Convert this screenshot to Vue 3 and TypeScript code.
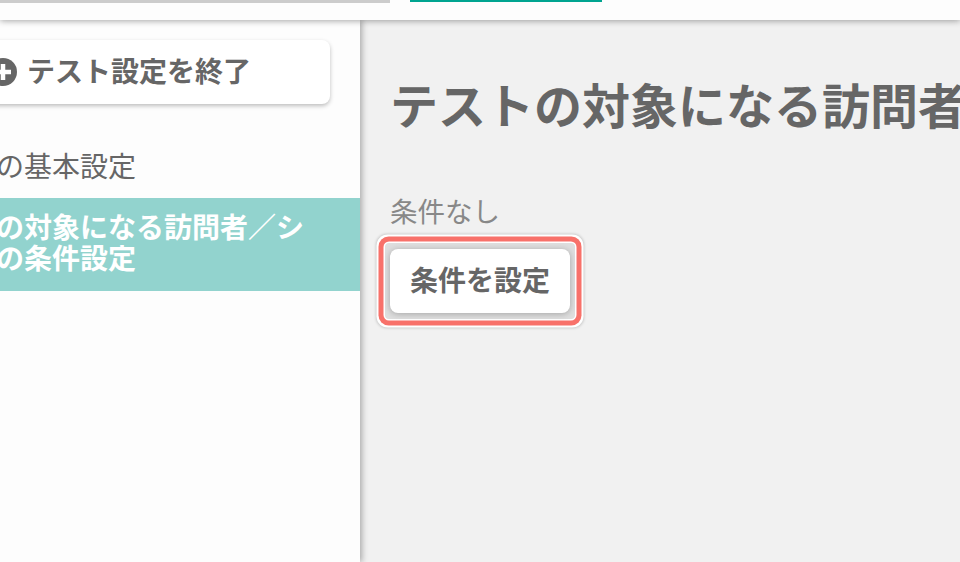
<script setup lang="ts">
const heading = 'テストの対象になる訪問者／シナリオの条件設定'
</script>

<template>
  <div class="page">
    <header class="topbar">
      <div class="search"></div>
      <div class="tab"></div>
    </header>
    <div class="body">
      <aside class="side">
        <button class="end">
          <svg class="end-icon" viewBox="0 0 28 28" width="28" height="28">
            <circle cx="14" cy="14" r="14" fill="#666" />
            <path d="M14 6v16M6 14h16" stroke="#fff" stroke-width="4.5" />
          </svg>
          <span class="end-label">テスト設定を終了</span>
        </button>
        <nav class="nav">
          <div class="nav-item">テストの基本設定</div>
          <div class="nav-item active">テストの対象になる訪問者／シナリオの条件設定</div>
        </nav>
      </aside>
      <main class="main">
        <h1 class="title">{{ heading }}</h1>
        <p class="none">条件なし</p>
        <div class="ring">
          <button class="set">条件を設定</button>
        </div>
      </main>
    </div>
  </div>
</template>

<style>
html, body { margin: 0; overflow: hidden; }
</style>

<style scoped>
.page {
  width: 960px;
  height: 562px;
  overflow: hidden;
  background: #f1f1f1;
  font-family: "Noto Sans CJK JP", "Noto Sans", sans-serif;
  color: #666;
}
.topbar {
  height: 20px;
  background: #fdfdfd;
  box-shadow: 0 1px 6px rgba(0, 0, 0, 0.35);
  display: flex;
  align-items: flex-start;
  position: relative;
  z-index: 2;
}
.search {
  width: 390px;
  height: 2.5px;
  background: #ccc;
}
.tab {
  width: 192px;
  height: 2px;
  margin-left: 20px;
  background: #00a490;
}
.body {
  display: flex;
  height: 542px;
}
.side {
  width: 360px;
  flex: none;
  background: #fdfdfd;
  box-shadow: 2px 0 6px rgba(0, 0, 0, 0.3);
  padding-top: 20px;
  position: relative;
  z-index: 1;
}
.end {
  display: flex;
  align-items: center;
  gap: 11px;
  width: 354px;
  height: 64px;
  margin-left: -24px;
  padding: 0 0 0 13px;
  box-sizing: border-box;
  border: 0;
  border-radius: 8px;
  background: #fff;
  box-shadow: 0 2px 4px rgba(0, 0, 0, 0.25);
  color: #666;
  font: 700 28px "Noto Sans CJK JP", sans-serif;
}
.end-icon { flex: none; }
.end-label { padding-bottom: 4px; margin-left: -1px; }
.nav { margin-top: 35px; }
.nav-item {
  margin-left: -88px;
  padding: 10px 40px 10px 0;
  font-size: 28px;
  line-height: 32px;
  width: 448px;
  box-sizing: border-box;
}
.nav-item.active {
  margin-top: 7px;
  padding: 12.5px 40px 18.5px 0;
  line-height: 31px;
  background: #92d3ce;
  color: #fff;
  font-weight: 700;
}
.main {
  flex: 1;
  min-width: 0;
  padding: 48px 0 0 30px;
}
.title {
  margin: 0;
  font-size: 48px;
  line-height: 70px;
  font-weight: 700;
  white-space: nowrap;
  color: #666;
}
.none {
  margin: 56px 0 0;
  font-size: 27.5px;
  line-height: 32px;
  color: #888;
}
.ring {
  display: inline-block;
  margin: 17px 0 0 -5px;
  padding: 6px 5px;
  border-radius: 4px;
  background: #dedede;
  box-shadow:
    0 0 0 1.5px #fff,
    0 0 0 6.5px #f8716a,
    0 0 0 8.5px #fff,
    0 0 3px 8.5px rgba(0, 0, 0, 0.2);
}
.set {
  display: block;
  width: 180px;
  height: 64px;
  border: 0;
  border-radius: 8px;
  background: #fff;
  box-shadow: 0 1px 6px rgba(0, 0, 0, 0.25);
  color: #666;
  font: 700 28px "Noto Sans CJK JP", sans-serif;
  padding: 0 0 4px;
}
</style>
